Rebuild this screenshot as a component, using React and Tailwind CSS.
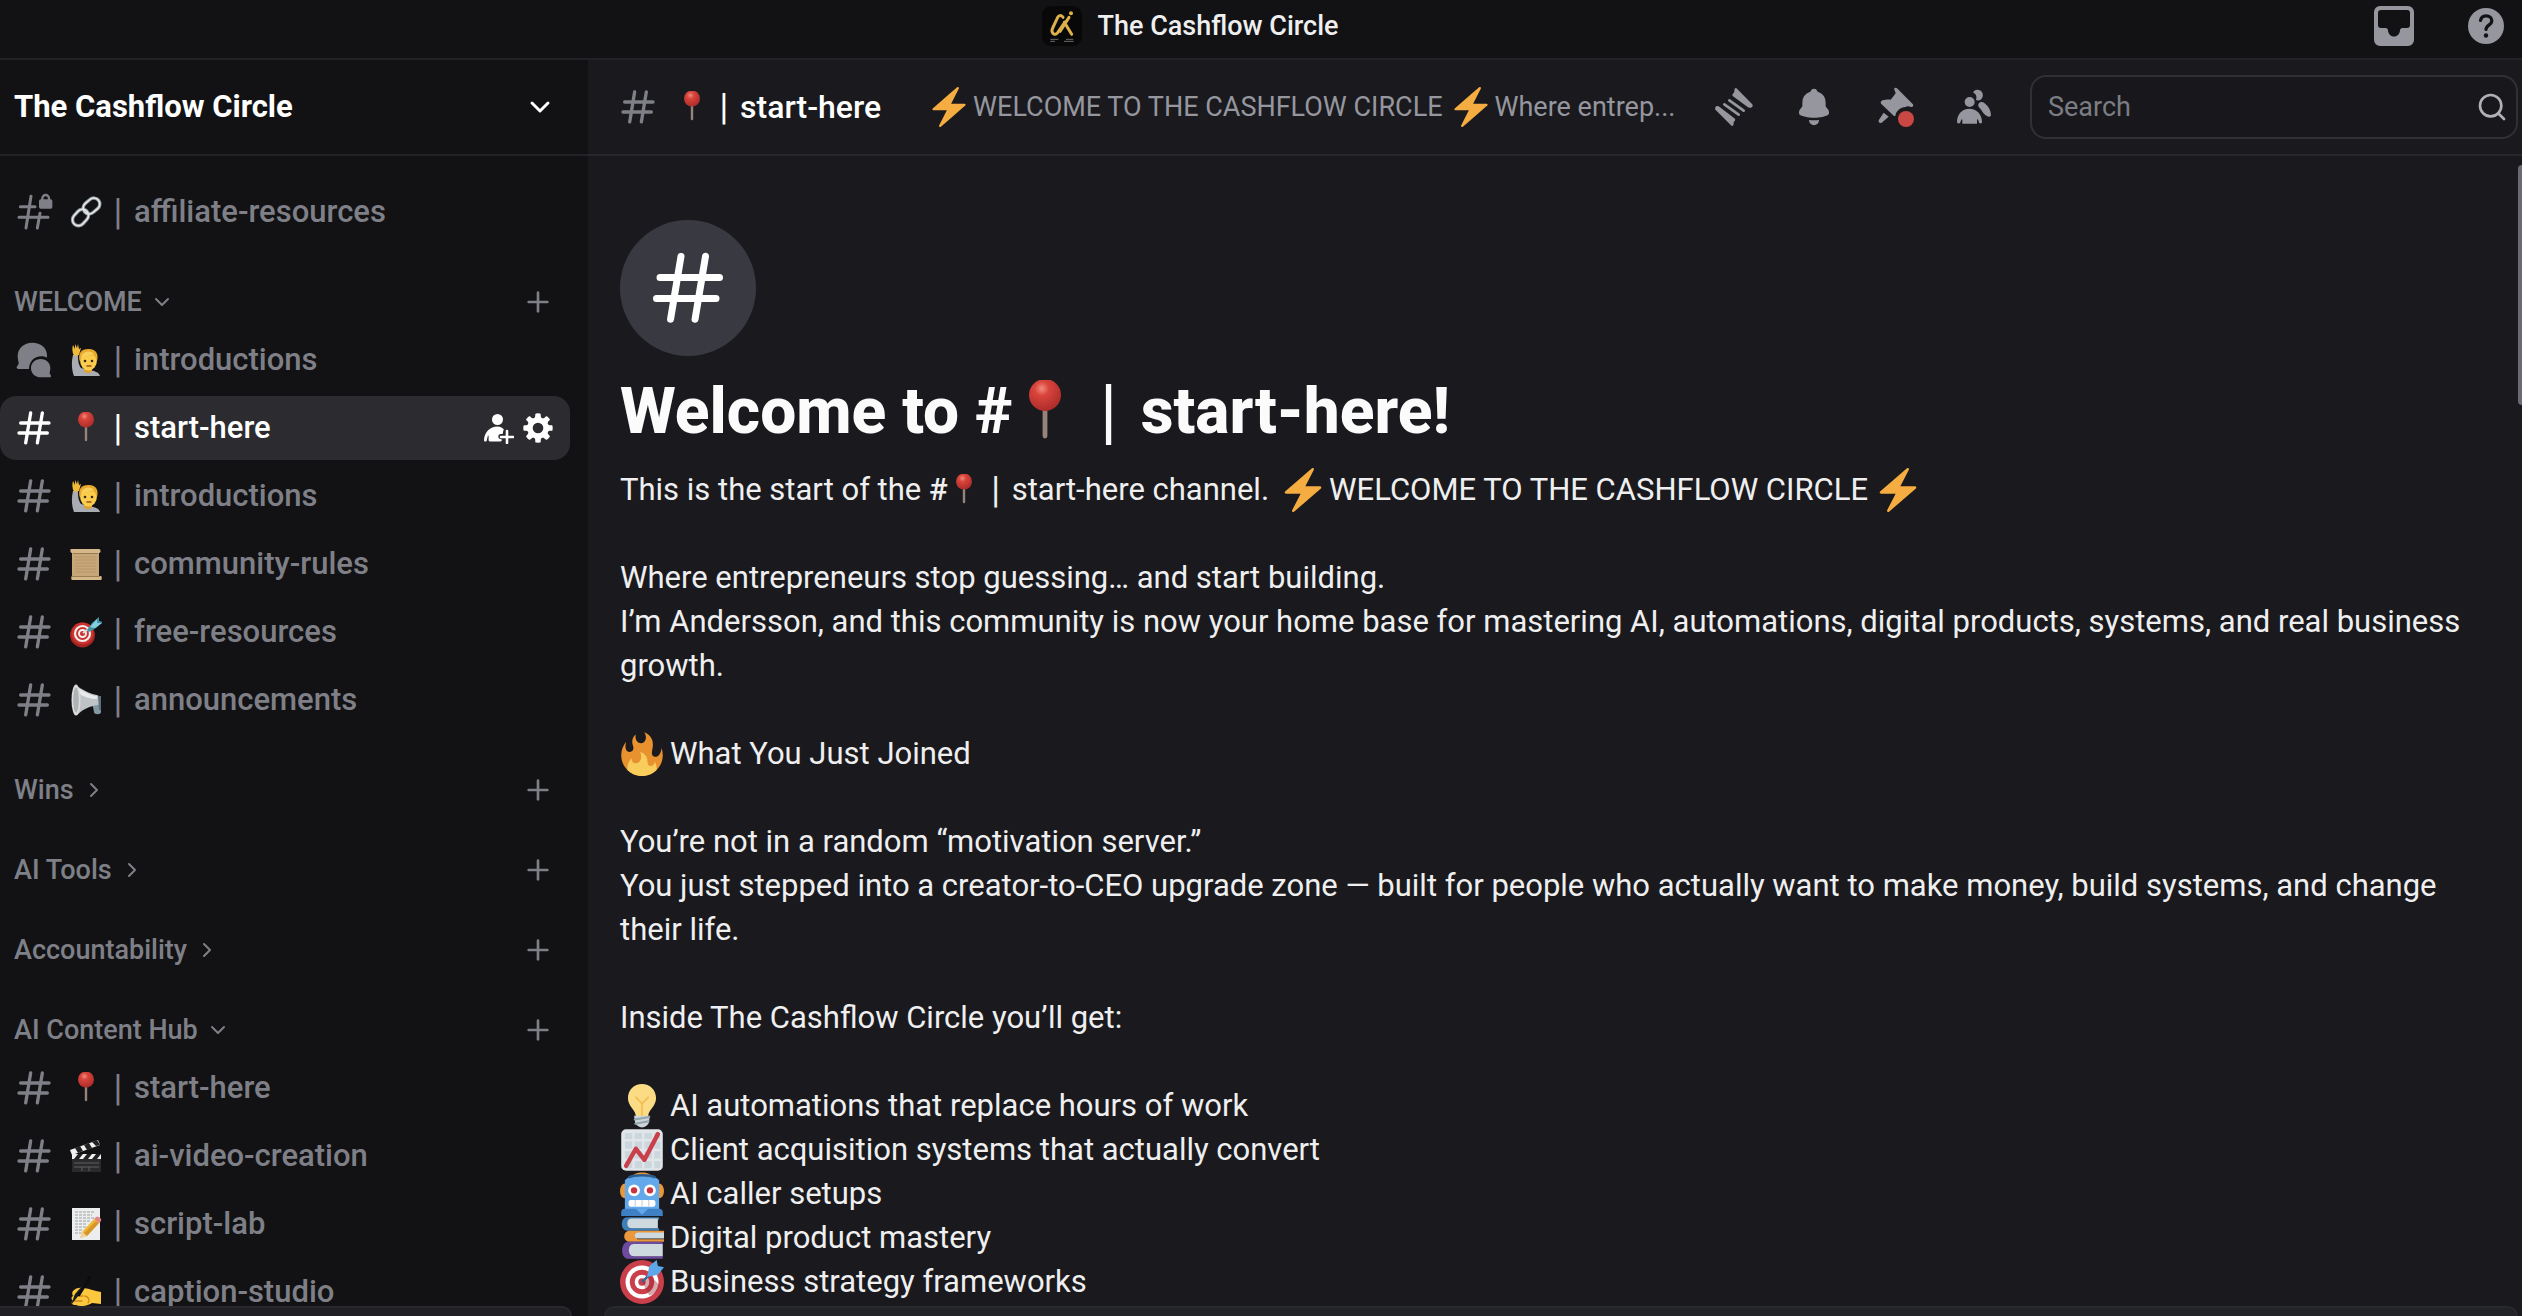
import { ChevronDown, ChevronRight, Plus, Search } from 'lucide-react';

function Hash({ className }) {
  return (
    <svg viewBox="0 0 24 24" fill="currentColor" className={className} aria-hidden="true">
      <path
        fillRule="evenodd"
        clipRule="evenodd"
        d="M10.99 3.16A1 1 0 1 0 9 2.84L8.15 8H4a1 1 0 0 0 0 2h3.82l-.67 4H3a1 1 0 1 0 0 2h3.82l-.8 4.84a1 1 0 0 0 1.97.32L8.85 16h4.97l-.8 4.84a1 1 0 0 0 1.97.32l.86-5.16H20a1 1 0 1 0 0-2h-3.82l.67-4H21a1 1 0 1 0 0-2h-3.82l.8-4.84a1 1 0 1 0-1.97-.32L15.15 8h-4.97l.8-4.84ZM14.15 14l.67-4H9.85l-.67 4h4.97Z"
      />
    </svg>
  );
}

function HashLock({ className }) {
  return (
    <svg viewBox="42 66 120 120" fill="none" stroke="currentColor" strokeLinecap="round" className={className} aria-hidden="true">
      <path strokeWidth="9" d="M93 79 78 174M120 130l-8 44M61 110h44M57 142h87" />
      <path strokeWidth="7" d="M127 90v-5a10 10 0 0 1 20 0v5" />
      <rect x="117" y="88" width="40" height="28" rx="5" fill="currentColor" stroke="none" />
    </svg>
  );
}

function Forum({ className }) {
  return (
    <svg viewBox="42 512 120 120" fill="currentColor" className={className} aria-hidden="true">
      <path d="M97 520c-25 0-44 17-44 40 0 10 3 18 3 22 0 5-6 8-6 12 0 3 2 5 5 5h32c1-22 15-38 37-38 6 0 11 1 16 4 1-3 1-5 1-8 0-21-19-37-44-37Z" />
      <path d="M122 569c-17 0-29 12-29 27 0 16 12 28 29 28h27c3 0 4-2 4-4 0-3-4-5-4-9 0-3 2-8 2-14 0-16-12-28-29-28Z" />
    </svg>
  );
}

function Gear({ className }) {
  return (
    <svg viewBox="0 0 24 24" fill="currentColor" className={className} aria-hidden="true">
      <path
        fillRule="evenodd"
        clipRule="evenodd"
        d="M10.56 1.1c-.46.05-.7.53-.64.98.18 1.16-.19 2.2-.98 2.53-.8.33-1.79-.15-2.49-1.1-.27-.36-.78-.52-1.14-.24-.77.59-1.45 1.27-2.04 2.04-.28.36-.12.87.24 1.14.96.7 1.43 1.7 1.1 2.49-.33.8-1.37 1.16-2.53.98-.45-.07-.93.18-.99.64a11.1 11.1 0 0 0 0 2.88c.06.46.54.7.99.64 1.16-.18 2.2.19 2.53.98.33.8-.14 1.79-1.1 2.49-.36.27-.52.78-.24 1.14.59.77 1.27 1.45 2.04 2.04.36.28.87.12 1.14-.24.7-.95 1.7-1.43 2.49-1.1.8.33 1.16 1.37.98 2.53-.07.45.18.93.64.99a11.1 11.1 0 0 0 2.88 0c.46-.06.7-.54.64-.99-.18-1.16.19-2.2.98-2.53.8-.33 1.79.14 2.49 1.1.27.36.78.52 1.14.24.77-.59 1.45-1.27 2.04-2.04.28-.36.12-.87-.24-1.14-.96-.7-1.43-1.7-1.1-2.49.33-.8 1.37-1.16 2.53-.98.45.07.93-.18.99-.64a11.1 11.1 0 0 0 0-2.88c-.06-.46-.54-.7-.99-.64-1.16.18-2.2-.19-2.53-.98-.33-.8.14-1.79 1.1-2.49.36-.27.52-.78.24-1.14a11.07 11.07 0 0 0-2.04-2.04c-.36-.28-.87-.12-1.14.24-.7.96-1.7 1.43-2.49 1.1-.8-.33-1.16-1.37-.98-2.53.07-.45-.18-.93-.64-.99a11.1 11.1 0 0 0-2.88 0ZM16 12a4 4 0 1 1-8 0 4 4 0 0 1 8 0Z"
      />
    </svg>
  );
}

function UserAdd({ className }) {
  return (
    <svg viewBox="0 0 32 32" fill="currentColor" className={className} aria-hidden="true">
      <circle cx="15.500" cy="7.500" r="5.500" />
      <path d="M15.500 14.500C8 14.500 2.500 20 2 28c0 1 .6 1.500 1.500 1.500.8 0 1.200-.4 1.300-1.300l1-4.200c.2-.6.8-.5.800.1v4c0 .9.500 1.400 1.400 1.400h10.500c.9 0 1.300-.5 1.300-1.200 0-.8-.5-1.300-1.300-1.300-1.400-.2-2.200-1.100-2.200-2.500 0-1.500 1-2.500 2.500-2.500h1.300c.5 0 .9-.4.900-.9 0-1.600.3-2.700.9-3.700-1.700-1.800-3.900-2.900-6.400-2.900Z" />
      <path d="M25 19v12M19 25h12" stroke="currentColor" strokeWidth="2.600" strokeLinecap="round" />
    </svg>
  );
}

function Threads({ className }) {
  return (
    <svg viewBox="42 51 120 120" fill="currentColor" className={className} aria-hidden="true">
      <path d="M104 56c2-3 5-3 7 0l45 46c4 4 2 11-4 11-3 0-6 0-9-2L99 79c-3-3-2-6 1-9 2-2 3-4 3-7Z" />
      <path d="M100 166c-2 3-5 2-7 0L47 120c-4-4-1-12 5-12 2 0 5 1 7 3l44 34c4 3 3 7 0 9-2 2-2 4-2 6Z" />
      <path d="m88 91 43 31M73 103l43 31" fill="none" stroke="currentColor" strokeWidth="8" strokeLinecap="round" />
    </svg>
  );
}

function Bell({ className }) {
  return (
    <svg viewBox="0 0 24 24" fill="currentColor" className={className} aria-hidden="true">
      <path d="M9.700 2.890c.18-.07.32-.24.37-.43a2 2 0 0 1 3.860 0c.05.2.19.36.38.43A7 7 0 0 1 19 9.500v2.090c0 .12.05.24.13.33l1.100 1.220a3 3 0 0 1 .77 2.010v.28c0 .67-.34 1.290-.95 1.560-1.310.6-4 1.510-8.050 1.510-4.050 0-6.740-.91-8.050-1.500-.61-.28-.95-.9-.95-1.570v-.28a3 3 0 0 1 .77-2l1.100-1.230a.5.5 0 0 0 .13-.33V9.500a7 7 0 0 1 4.700-6.610ZM9.180 19.840A.16.16 0 0 0 9 20a3 3 0 1 0 6 0c0-.1-.09-.17-.18-.16a24.860 24.860 0 0 1-5.640 0Z" />
    </svg>
  );
}

function Pushpin({ className }) {
  return (
    <svg viewBox="522 51 120 120" fill="currentColor" className={className} aria-hidden="true">
      <path d="M583 55c2-3 5-2 8 0l47 47c4 4 1 10-5 9l-8-2c-3-1-5 0-8 2-15 0-30 12-31 27h-4l-38-36c-4-4-1-9 4-11 9-3 17-2 24-2l13-16c2-2 2-4 1-7-2-4-4-8-3-11Z" />
      <path d="m551 128 15 12-21 18c-6 3-12-3-8-9Z" />
      <circle cx="618" cy="147" r="24" fill="#ca4744" />
    </svg>
  );
}

function Members({ className }) {
  return (
    <svg viewBox="762 51 120 120" fill="currentColor" className={className} aria-hidden="true">
      <circle cx="809" cy="96" r="15" />
      <path d="M822 63c7-6 17-5 23 2 6 8 4 18-3 24-5 3-10 3-14 1 3-9 1-18-8-22 0-2 1-4 2-5Z" />
      <path d="M836 101c4-6 12-6 18-1 12 9 18 21 19 35 0 5-7 7-11 4-9-5-14-12-18-19-4-7-13-11-8-19Z" />
      <path d="M808 116c-22 0-37 17-37 40 0 4 4 5 7 4 4-1 3-6 6-11 1-2 3-1 3 1v11h44v-11c0-2 2-3 3-1 3 5 2 10 6 11 3 1 6 0 6-4 0-23-16-40-38-40Z" />
    </svg>
  );
}

function Inbox({ className }) {
  return (
    <svg viewBox="0 0 40 40" fill="currentColor" className={className} aria-hidden="true">
      <path
        fillRule="evenodd"
        d="M6 0h28a6 6 0 0 1 6 6v28a6 6 0 0 1-6 6H6a6 6 0 0 1-6-6V6a6 6 0 0 1 6-6Zm1 4a3 3 0 0 0-3 3v12a3 3 0 0 0 3 3h4.500c1.500 0 2.500 1 2.500 2.500 1 8 11 8 12 0 0-1.500 1-2.500 2.500-2.500H33a3 3 0 0 0 3-3V7a3 3 0 0 0-3-3Z"
      />
    </svg>
  );
}

function Help({ className }) {
  return (
    <svg viewBox="0 0 36 36" className={className} aria-hidden="true">
      <circle cx="18" cy="18" r="18" fill="currentColor" />
      <path d="M12.500 12.500c.5-3 2.700-4.700 5.600-4.700 3.300 0 5.700 2 5.700 5 0 4.500-5.800 4.200-5.800 8.700" fill="none" stroke="#121214" strokeWidth="3.200" strokeLinecap="round" />
      <circle cx="18" cy="27.500" r="2.200" fill="#121214" />
    </svg>
  );
}

function ServerLogo({ className }) {
  return (
    <svg viewBox="36 16 120 120" className={className} aria-hidden="true">
      <rect x="36" y="16" width="120" height="120" rx="28" fill="#080808" />
      <g fill="none" stroke="#dcb04a" strokeLinecap="round">
        <path strokeWidth="9" d="M99 50c-4-7-12-7-16 0L68 82c-7 14 6 26 15 14l22-32" />
        <path strokeWidth="9" d="m103 65 22 36M90 92l27-42" />
      </g>
      <circle cx="123" cy="38" r="6" fill="#dcb04a" />
      <path d="M61 116h24M61 122h14M108 116h22M102 122h29" stroke="#6b6b6b" strokeWidth="3" />
    </svg>
  );
}

/* Emoji artwork */

function PinEmoji({ className }) {
  return (
    <svg viewBox="0 0 32 32" className={className} role="img" aria-label="round pushpin">
      <defs>
        <radialGradient id="pinHead" cx=".4" cy=".3" r=".75">
          <stop offset="0" stopColor="#f28b7d" />
          <stop offset=".3" stopColor="#d9443c" />
          <stop offset="1" stopColor="#a82a28" />
        </radialGradient>
      </defs>
      <path d="M16 14v14" stroke="#96847b" strokeWidth="2.400" strokeLinecap="round" />
      <circle cx="16" cy="7.500" r="8" fill="url(#pinHead)" />
    </svg>
  );
}

function LinkEmoji({ className }) {
  return (
    <svg viewBox="0 0 32 32" className={className} role="img" aria-label="link" fill="none">
      <g stroke="#8f9499" strokeWidth="3.400">
        <rect x="-9" y="-6" width="18" height="12" rx="6" transform="translate(10.500 21.500) rotate(-48)" />
        <rect x="-9" y="-6" width="18" height="12" rx="6" transform="translate(21.500 10) rotate(-40)" />
      </g>
      <g stroke="#e8ecee" strokeWidth="1.500">
        <rect x="-9" y="-6" width="18" height="12" rx="6" transform="translate(10.500 21.500) rotate(-48)" />
        <rect x="-9" y="-6" width="18" height="12" rx="6" transform="translate(21.500 10) rotate(-40)" />
      </g>
    </svg>
  );
}

function HandRaiseEmoji({ className }) {
  return (
    <svg viewBox="0 0 32 32" className={className} role="img" aria-label="person raising hand">
      <path d="M3 11c-2 8-1 16 1 21h26c-1-4-6-5-10-6l-9-2c-3-4-3-9-3-13Z" fill="#a9adb3" />
      <path d="m3 1 2 4V0l2 4 1-4 1 5 2-1-2 7-5 1c-2-4-2-8-1-11Z" fill="#f0b93a" />
      <path d="M14 23h8v4c-2 3-6 3-8 0Z" fill="#e0a030" />
      <ellipse cx="18.500" cy="16" rx="8.500" ry="10.500" fill="#fbcd4b" />
      <path d="M10 18C7 9 12 4.500 19 5c7 0 10 5 8 12-1-3-2-5-4-6-4 2-9 1-11 1-1 2-2 4-2 6Z" fill="#e9a92c" />
      <path d="M11 12c3-5 9-6 13-2-4 2-9 3-13 2Z" fill="#f7cf5e" />
      <circle cx="15" cy="17" r="1.300" fill="#3d2a16" />
      <circle cx="22" cy="17" r="1.300" fill="#3d2a16" />
      <path d="M17 22h4" stroke="#9b4c24" strokeWidth="1.500" strokeLinecap="round" />
    </svg>
  );
}

function ScrollEmoji({ className }) {
  return (
    <svg viewBox="0 0 32 32" className={className} role="img" aria-label="scroll">
      <path d="M2 3h27v27H2Z" fill="#c7a77a" />
      <path d="M1 1h28c2 0 2 4 0 4H2C0 5 0 1 1 1Z" fill="#d4b88a" />
      <path d="M2 28h29c1 0 1 4 0 4H2c-1 0-1-4 0-4Z" fill="#d4b88a" />
      <path d="M3 5.500h25M2 28.500h28" stroke="#8d6f47" strokeWidth=".8" />
      <path d="M5 9h21M5 12h21M5 15h21M5 18h21M5 21h21M5 24h21" stroke="#b59566" strokeWidth=".8" />
    </svg>
  );
}

function AppleDartEmoji({ className }) {
  return (
    <svg viewBox="0 0 32 32" className={className} role="img" aria-label="direct hit">
      <ellipse cx="12.500" cy="19" rx="12.500" ry="12.500" fill="#a32422" />
      <circle cx="12.500" cy="17.500" r="11" fill="#ca332f" />
      <circle cx="12.500" cy="17.500" r="7.500" fill="none" stroke="#f5efec" strokeWidth="2.200" />
      <circle cx="12.500" cy="17.500" r="3.500" fill="none" stroke="#f5efec" strokeWidth="2" />
      <path d="m13 17 8-6" stroke="#d9dde0" strokeWidth="2" />
      <path d="m17 14 5-7 7-6v4l4 1-7 6-7 4Z" fill="#3f96a8" />
      <path d="m20 11 7-8v4l5 0-7 5Z" fill="#84cfdb" />
    </svg>
  );
}

function MegaphoneEmoji({ className }) {
  return (
    <svg viewBox="0 0 32 32" className={className} role="img" aria-label="loudspeaker">
      <path d="M22 18h8l1 10c0 3-7 3-7 0Z" fill="#8398a5" />
      <path d="M5 1c8 5 15 9 22 10 4 1 5 9 1 10-8 1-15 4-21 10Z" fill="#bfc3c5" />
      <path d="M8 4c7 4 14 8 19 8v3C20 15 14 13 8 9Z" fill="#e7e9ea" />
      <ellipse cx="6" cy="16" rx="4.500" ry="15.500" fill="#d9dcdd" />
      <ellipse cx="6" cy="16" rx="2.800" ry="12.500" fill="#b0b3b5" />
      <path d="M28 12h3v14h-2Z" fill="#5d727e" />
    </svg>
  );
}

function ClapperEmoji({ className }) {
  return (
    <svg viewBox="0 0 32 32" className={className} role="img" aria-label="clapper board">
      <path d="M0 10 28 0l2 5L2 15Z" fill="#f1f1f1" />
      <path d="m5 8 5-2 3 5-5 2ZM14 5l5-2 3 5-5 2ZM22 2l5-2 3 5-4 1Z" fill="#222" />
      <path d="M2 14h29v18H2Z" fill="#2a2a2c" />
      <path d="M2 14h29v5H2Z" fill="#f1f1f1" />
      <path d="m8 14-4 5h5l4-5ZM17 14l-4 5h5l4-5ZM26 14l-4 5h5l4-5Z" fill="#222" />
      <path d="M4 23h25M4 27h25M12 27v4M19 27v4" stroke="#5f5f63" />
    </svg>
  );
}

function MemoEmoji({ className }) {
  return (
    <svg viewBox="0 0 32 32" className={className} role="img" aria-label="memo">
      <path d="M2 0h28v32H2Z" fill="#eceded" />
      <path d="M5 4h20M5 7h17M5 10h20M5 13h16M5 16h12M5 19h11M5 22h8M5 25h6" stroke="#9da0a2" strokeDasharray="3 1" />
      <path d="m12 24 12-13 5 4-12 13-7 2Z" fill="#f0b93a" />
      <path d="m14 25 12-12 3 2-12 13Z" fill="#d8962a" />
      <path d="m24 11 2-2c3-1 6 2 5 4l-2 2Z" fill="#e68383" />
      <path d="m12 24 5 4-7 2Z" fill="#eed2a2" />
    </svg>
  );
}

function WritingEmoji({ className }) {
  return (
    <svg viewBox="0 0 32 32" className={className} role="img" aria-label="writing hand">
      <path d="M3 15c2-3 7-4 10-3 5 0 11 3 18 4v12l-9-1c-5 3-11 4-16 2-4 0-6-2-3-4-2-2-2-4 0-5-1-2-1-4 0-5Z" fill="#fbc73d" />
      <path d="M4 20h9M4 25h8M15 20c4 1 5 4 3 7" stroke="#cf8a1d" strokeWidth="1.300" fill="none" strokeLinecap="round" />
      <path d="M20 1 9 19 1 29l4-11Z" fill="#1c1c1e" />
      <path d="M20 1 9 19" stroke="#0c0c0d" strokeWidth="2.500" strokeLinecap="round" />
    </svg>
  );
}

function BoltEmoji({ className }) {
  return (
    <svg viewBox="0 0 36 36" className={className} role="img" aria-label="high voltage">
      <path
        fill="#f5ac40"
        d="M32.938 15.651C32.792 15.260 32.418 15 32 15H19.925L26.890 1.458c.219-.426.106-.947-.271-1.243C26.437.071 26.218 0 26 0c-.233 0-.466.082-.653.243L18 6.588 3.347 19.243c-.316.273-.43.714-.284 1.105S3.582 21 4 21h12.075L9.110 34.542c-.219.426-.106.947.271 1.243.182.144.401.215.619.215.233 0 .466-.082.653-.243L18 29.412l14.653-12.655c.317-.273.43-.714.285-1.106z"
      />
    </svg>
  );
}

function FireEmoji({ className }) {
  return (
    <svg viewBox="0 0 36 36" className={className} role="img" aria-label="fire">
      <path
        fill="#e8912f"
        d="M35 19c0-2.062-.367-4.039-1.040-5.868-.46 5.389-3.333 8.157-6.335 6.868-2.812-1.208-.917-5.917-.777-8.164.236-3.809-.012-8.169-6.931-11.794 2.875 5.500.333 8.917-2.333 9.125-2.958.231-5.667-2.542-4.667-7.042-3.238 2.386-3.332 6.402-2.333 9 1.042 2.708-.042 4.958-2.583 5.208-2.840.28-4.418-3.041-2.963-8.333C2.520 10.965 1 14.805 1 19c0 9.389 7.611 17 17 17s17-7.611 17-17z"
      />
      <path
        fill="#f8cd5c"
        d="M28.394 23.999c.148 3.084-2.561 4.293-4.019 3.709-2.106-.843-1.541-2.291-2.083-5.291s-2.625-5.083-5.708-6c2.250 6.333-1.247 8.667-3.080 9.084-1.872.426-3.753-.001-3.968-4.007C7.352 23.668 6 26.676 6 30c0 .368.023.73.055 1.090C9.125 34.124 13.342 36 18 36s8.875-1.876 11.945-4.910c.032-.36.055-.722.055-1.090 0-2.187-.584-4.236-1.606-6.001z"
      />
    </svg>
  );
}

function BulbEmoji({ className }) {
  return (
    <svg viewBox="0 0 36 36" className={className} role="img" aria-label="light bulb">
      <path d="M29.500 11.500C29.500 5 24.500 0 18 0S6.500 5 6.500 11.500c0 7 6.500 10 6.500 15h10c0-5 6.500-8 6.500-15Z" fill="#fbdb83" />
      <path d="M18 26V16l-5-5M18 16l5-5" fill="none" stroke="#f3bd54" strokeWidth="1.400" strokeLinecap="round" />
      <path d="M11.500 26h13l-1 6c-1 2-3 3.500-5.500 3.500S13.500 34 12.500 32Z" fill="#cbd5db" />
      <path d="m12 29 12-2M12.500 32.500l11-2" stroke="#94a4ad" strokeWidth="1.600" strokeLinecap="round" />
    </svg>
  );
}

function ChartEmoji({ className }) {
  return (
    <svg viewBox="0 0 36 36" className={className} role="img" aria-label="chart increasing">
      <rect x="1" y="1" width="34" height="34" rx="4" fill="#e1e6ea" />
      <path
        d="M4 4h6v5H4zM12 4h6v5h-6zM20 4h6v5h-6zM28 4h5v5h-5zM4 11h6v6H4zM12 11h6v6h-6zM20 11h6v6h-6zM28 11h5v6h-5zM4 19h6v6H4zM12 19h6v6h-6zM20 19h6v6h-6zM28 19h5v6h-5zM4 27h6v6H4zM12 27h6v6h-6zM20 27h6v6h-6zM28 27h5v6h-5z"
        fill="#ccd6dd"
      />
      <path d="m5 31 8-14 7 9L31 5" fill="none" stroke="#ca3f4a" strokeWidth="3.600" strokeLinecap="round" strokeLinejoin="round" />
    </svg>
  );
}

function RobotEmoji({ className }) {
  return (
    <svg viewBox="0 0 36 36" className={className} role="img" aria-label="robot">
      <ellipse cx="4" cy="15.500" rx="4" ry="6" fill="#e8973a" />
      <ellipse cx="32" cy="15.500" rx="4" ry="6" fill="#e8973a" />
      <path d="M9 5c2-6 16-6 18 0Z" fill="#e8973a" />
      <path d="M4 7c4-6 24-6 28 0v24H4Z" fill="#62a8ea" />
      <path d="M7 4.500c5-2.500 17-2.500 22 0" fill="none" stroke="#2d5c8c" strokeWidth="2" />
      <path d="M1 33c0-2 1-3 3-3h28c2 0 3 1 3 3v3H1Z" fill="#3f7fc4" />
      <path d="m13 30 5 5 5-5Z" fill="#62a8ea" />
      <circle cx="11.500" cy="15" r="4.800" fill="#fff" />
      <circle cx="24.500" cy="15" r="4.800" fill="#fff" />
      <circle cx="11.500" cy="15" r="2.600" fill="#c9343f" />
      <circle cx="24.500" cy="15" r="2.600" fill="#c9343f" />
      <rect x="7" y="23" width="22" height="5.500" rx="2" fill="#fff" />
      <path d="M12.500 23v5.500M18 23v5.500M23.500 23v5.500" stroke="#c9d4dc" />
    </svg>
  );
}

function BooksEmoji({ className }) {
  return (
    <svg viewBox="0 0 36 36" className={className} role="img" aria-label="books">
      <path d="M6 1h26v2H8v7h24v2H6c-6 0-6-11 0-11Z" fill="#3f7fb8" />
      <path d="M9 2h22v8H9c-4 0-4-8 0-8Z" fill="#cdd8df" />
      <path d="M8 12h28v2H14v5h22v2H8c-6 0-6-9 0-9Z" fill="#ea983b" />
      <path d="M15 13.500h21v5H15c-4 0-4-5 0-5Z" fill="#cdd8df" />
      <path d="M7 21h28v2H10v10h25v2H7c-7 0-7-14 0-14Z" fill="#6d4aa0" />
      <path d="M11 23h24v10H11c-5 0-5-10 0-10Z" fill="#cdd8df" />
    </svg>
  );
}

function TargetEmoji({ className }) {
  return (
    <svg viewBox="0 0 36 36" className={className} role="img" aria-label="direct hit">
      <circle cx="18" cy="18" r="18" fill="#ca3f4a" />
      <circle cx="18" cy="18" r="13.500" fill="#fff" />
      <circle cx="18" cy="18" r="10" fill="#ca3f4a" />
      <circle cx="18" cy="18" r="6" fill="#fff" />
      <circle cx="18" cy="18" r="3" fill="#ca3f4a" />
      <path d="m18 18 6 11c4-1 7-4 9-8L24 12Z" fill="#9b2833" opacity=".4" />
      <path d="m18.500 17.500 10-10" stroke="#31689c" strokeWidth="1.800" strokeLinecap="round" />
      <path d="m22 14 2-9 6-5 1 5 5 1-5 6Z" fill="#5da6e8" />
    </svg>
  );
}

const channelIcons = { hash: Hash, locked: HashLock, forum: Forum };

const groups = [
  {
    name: 'WELCOME',
    open: true,
    channels: [
      { type: 'forum', Emoji: HandRaiseEmoji, name: 'introductions' },
      { type: 'hash', Emoji: PinEmoji, name: 'start-here', active: true },
      { type: 'hash', Emoji: HandRaiseEmoji, name: 'introductions' },
      { type: 'hash', Emoji: ScrollEmoji, name: 'community-rules' },
      { type: 'hash', Emoji: AppleDartEmoji, name: 'free-resources' },
      { type: 'hash', Emoji: MegaphoneEmoji, name: 'announcements' },
    ],
  },
  { name: 'Wins', open: false, channels: [] },
  { name: 'AI Tools', open: false, channels: [] },
  { name: 'Accountability', open: false, channels: [] },
  {
    name: 'AI Content Hub',
    open: true,
    channels: [
      { type: 'hash', Emoji: PinEmoji, name: 'start-here' },
      { type: 'hash', Emoji: ClapperEmoji, name: 'ai-video-creation' },
      { type: 'hash', Emoji: MemoEmoji, name: 'script-lab' },
      { type: 'hash', Emoji: WritingEmoji, name: 'caption-studio' },
    ],
  },
];

const perks = [
  { Emoji: BulbEmoji, text: 'AI automations that replace hours of work' },
  { Emoji: ChartEmoji, text: 'Client acquisition systems that actually convert' },
  { Emoji: RobotEmoji, text: 'AI caller setups' },
  { Emoji: BooksEmoji, text: 'Digital product mastery' },
  { Emoji: TargetEmoji, text: 'Business strategy frameworks' },
];

function Divider() {
  return <span className="w-8 text-center text-[36px] font-normal">|</span>;
}

function Channel({ channel }) {
  const Icon = channelIcons[channel.type];
  const { Emoji } = channel;

  return (
    <div
      className={`mb-1 flex h-16 shrink-0 items-center rounded-2xl pr-4 pl-3.5 ${
        channel.active ? 'bg-[#2c2c30] text-white' : 'text-[#7f8087]'
      }`}
    >
      <a href="#channel" className="flex min-w-0 flex-1 items-center text-[31px] leading-10 font-medium">
        <Icon className="mr-4 size-10 shrink-0" />
        <Emoji className="size-8 shrink-0" />
        <Divider />
        <span className="truncate">{channel.name}</span>
      </a>
      {channel.active ? (
        <div className="flex gap-2">
          <button type="button" aria-label="Create invite">
            <UserAdd className="size-8" />
          </button>
          <button type="button" aria-label="Edit channel">
            <Gear className="size-8" />
          </button>
        </div>
      ) : null}
    </div>
  );
}

function Group({ group }) {
  const Chevron = group.open ? ChevronDown : ChevronRight;

  return (
    <section>
      <div className="flex h-20 items-center justify-between pt-7 pr-5 pl-3.5 text-[#7f8087]">
        <button type="button" className="flex items-center gap-2 text-[27px] leading-9 font-medium">
          {group.name}
          <Chevron className="size-6" strokeWidth={2} />
        </button>
        <button type="button" aria-label={`Create channel in ${group.name}`}>
          <Plus className="-mr-1 size-8" strokeWidth={2} />
        </button>
      </div>
      {group.channels.map((channel) => (
        <Channel key={`${channel.type}-${channel.name}`} channel={channel} />
      ))}
    </section>
  );
}

function Sidebar() {
  return (
    <aside className="flex w-[588px] shrink-0 flex-col">
      <button
        type="button"
        className="flex h-24 shrink-0 items-center justify-between border-b-2 border-[#232327] pr-8 pl-3.5 text-[31px] font-bold text-white"
      >
        The Cashflow Circle
        <ChevronDown className="size-8" strokeWidth={2.2} />
      </button>
      <nav className="min-h-0 flex-1 overflow-hidden pt-6 pr-[18px]">
        <Channel channel={{ type: 'locked', Emoji: LinkEmoji, name: 'affiliate-resources' }} />
        {groups.map((group) => (
          <Group key={group.name} group={group} />
        ))}
      </nav>
      <div className="mr-4 h-2.5 shrink-0 rounded-tr-2xl border-t-2 border-r-2 border-[#28282d] bg-[#202024]" />
    </aside>
  );
}

function ChannelHeader() {
  return (
    <header className="flex h-24 shrink-0 items-center border-b-2 border-[#28282c] pr-1 pl-[30px] text-[#95969e]">
      <h2 className="flex items-center text-[32px] leading-10 font-medium text-white">
        <Hash className="mr-[18px] size-10 text-[#7f8087]" />
        <PinEmoji className="size-8" />
        <Divider />
        start-here
      </h2>
      <p className="ml-12 flex min-w-0 flex-1 items-center gap-1 overflow-hidden text-[27px] leading-10 whitespace-nowrap">
        <BoltEmoji className="size-10 shrink-0" />
        WELCOME TO THE CASHFLOW CIRCLE
        <BoltEmoji className="ml-1 size-10 shrink-0" />
        Where entrep...
      </p>
      <div className="mr-9 flex shrink-0 gap-10">
        <button type="button" aria-label="Threads">
          <Threads className="size-10" />
        </button>
        <button type="button" aria-label="Notification settings">
          <Bell className="size-10" />
        </button>
        <button type="button" aria-label="Pinned messages">
          <Pushpin className="size-10" />
        </button>
        <button type="button" aria-label="Show member list">
          <Members className="size-10" />
        </button>
      </div>
      <label className="flex h-16 w-[488px] shrink-0 items-center rounded-2xl border-2 border-[#303035] bg-[#18181c] pr-2 pl-4">
        <input
          type="search"
          aria-label="Search"
          placeholder="Search"
          className="min-w-0 flex-1 bg-transparent text-[27px] outline-none placeholder:text-[#7c7d84]"
        />
        <Search className="size-8 text-[#b0b1b6]" strokeWidth={2} />
      </label>
    </header>
  );
}

function Welcome() {
  return (
    <div className="min-h-0 flex-1 overflow-hidden px-8 pt-16 text-[31px] leading-11 text-[#efeff0]">
      <div className="flex size-[136px] items-center justify-center rounded-full bg-[#393a41]">
        <Hash className="size-[84px] text-white" />
      </div>
      <h1 className="mt-4 flex h-20 items-center text-[64px] leading-20 font-extrabold text-[#fbfbfb]">
        Welcome to #
        <PinEmoji className="size-16" />
        <span className="w-16 text-center text-[72px] font-normal">|</span>
        start-here!
      </h1>
      <p className="mt-4 mb-11 flex h-11 items-center">
        <span>
          This is the start of the <span className="font-medium">#</span>
        </span>
        <PinEmoji className="size-8" />
        <Divider />
        start-here channel.
        <BoltEmoji className="mr-1 ml-3 size-11" />
        WELCOME TO THE CASHFLOW CIRCLE
        <BoltEmoji className="ml-2 size-11" />
      </p>
      <p>Where entrepreneurs stop guessing… and start building.</p>
      <p className="mb-11">
        I’m Andersson, and this community is now your home base for mastering AI, automations, digital products,
        systems, and real business growth.
      </p>
      <p className="mb-11 flex items-center gap-1.5">
        <FireEmoji className="size-11" />
        What You Just Joined
      </p>
      <p>You’re not in a random “motivation server.”</p>
      <p className="mb-11">
        You just stepped into a creator-to-CEO upgrade zone — built for people who actually want to make money, build
        systems, and change their life.
      </p>
      <p className="mb-11">Inside The Cashflow Circle you’ll get:</p>
      <ul>
        {perks.map(({ Emoji, text }) => (
          <li key={text} className="flex items-center gap-1.5">
            <Emoji className="size-11" />
            {text}
          </li>
        ))}
      </ul>
    </div>
  );
}

export default function App() {
  return (
    <div className="flex h-screen flex-col overflow-hidden bg-[#121214] font-[Roboto,'Noto_Sans',sans-serif]">
      <header className="flex h-15 shrink-0 items-center border-b-2 border-[#232327] pb-1.5 text-[#95969e]">
        <div className="flex-[1_1_0px]" />
        <div className="flex items-center gap-4 text-[27px] leading-9 font-medium text-[#efeff0]">
          <ServerLogo className="size-10" />
          The Cashflow Circle
        </div>
        <div className="flex flex-[1_1_142px] items-center justify-end gap-[54px] pr-[18px]">
          <button type="button" aria-label="Inbox">
            <Inbox className="size-10" />
          </button>
          <button type="button" aria-label="Help">
            <Help className="size-9" />
          </button>
        </div>
      </header>
      <div className="flex min-h-0 flex-1">
        <Sidebar />
        <main className="relative flex min-w-0 flex-1 flex-col bg-[#1a1a1e]">
          <ChannelHeader />
          <Welcome />
          <div className="mr-1 ml-4 h-2.5 shrink-0 rounded-t-2xl border-2 border-b-0 border-[#28282d] bg-[#222327]" />
          <div className="absolute top-[105px] right-0 h-60 w-1 rounded-l-full bg-[#6a6a72]" />
        </main>
      </div>
    </div>
  );
}
